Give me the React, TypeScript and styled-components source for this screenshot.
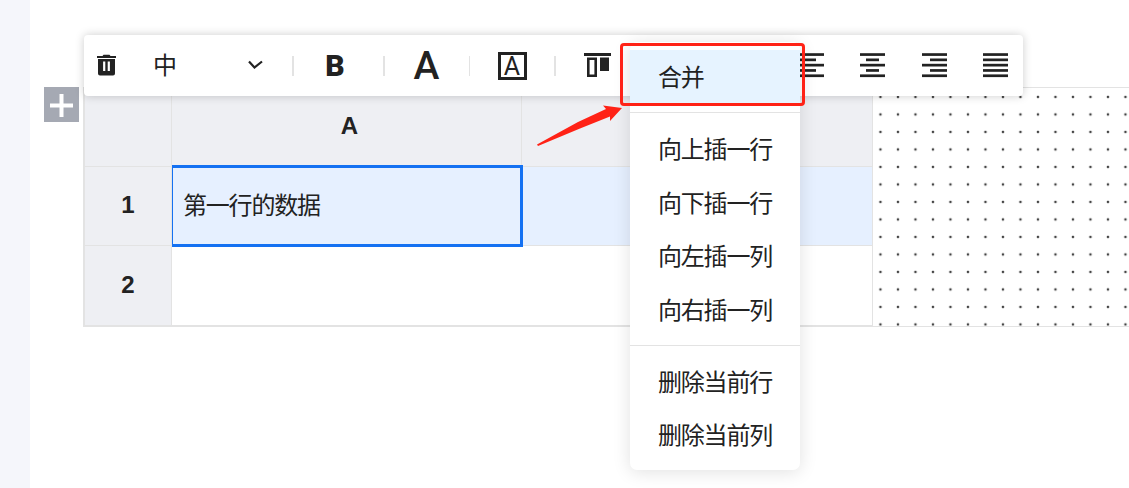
import React from 'react';
import styled, { createGlobalStyle } from 'styled-components';

const GlobalStyle = createGlobalStyle`
  * { box-sizing: border-box; }
  body {
    margin: 0;
    overflow: hidden;
    background: #fff;
    color: #222;
    font-family: 'Liberation Sans', 'Noto Sans CJK SC', sans-serif;
  }
`;

const Page = styled.div`
  position: relative;
  display: flex;
  width: 1129px;
  height: 488px;
  overflow: hidden;
`;

const Sidebar = styled.aside`
  flex: 0 0 30px;
  background: #f5f6fb;
`;

const Editor = styled.main`
  flex: 1;
  display: flex;
  align-items: flex-start;
  padding: 87px 0 0 14px;
`;

const AddButton = styled.button`
  display: flex;
  align-items: center;
  justify-content: center;
  flex: 0 0 35px;
  height: 35px;
  margin-right: 4px;
  padding: 2px 0 0;
  border: 0;
  background: #a5a9b3;
`;

const Sheet = styled.div`
  display: grid;
  flex: 0 0 790px;
  grid-template-columns: 87px 350px 351px;
  grid-template-rows: 80px 79px 79px;
  height: 240px;
  border-left: 2px solid #e3e3e3;
  border-bottom: 2px solid #e3e3e3;
`;

const Cell = styled.div<{ $fill: string; $selected?: boolean; $open?: boolean }>`
  position: relative;
  z-index: ${(p) => (p.$selected ? 1 : 0)};
  display: flex;
  align-items: center;
  padding: 0 11px 5px;
  border-right: 1px solid ${(p) => (p.$open ? 'transparent' : '#e3e3e3')};
  border-bottom: 1px solid #e3e3e3;
  background: ${(p) => p.$fill};
  font-size: 24px;
  letter-spacing: -1.2px;
  white-space: nowrap;
  &:nth-child(n + 7) { border-bottom: 0; }
`;

const HeadCell = styled(Cell)<{ $shift?: number }>`
  justify-content: center;
  padding: 0 0 2px ${(p) => p.$shift ?? 0}px;
  font-weight: 700;
  letter-spacing: 0;
`;

const Selection = styled.span`
  position: absolute;
  inset: -2px -2px -2px 0;
  border: 3px solid #1471f2;
  border-left-width: 1px;
`;

const DotCanvas = styled.div`
  flex: 1;
  height: 240px;
  border-top: 1px solid #e3e3e3;
  border-bottom: 1px solid #e3e3e3;
  background-image: radial-gradient(circle at center, #444 0.75px, transparent 1.7px);
  background-size: 17.5px 17.5px;
  background-position: -1.3px 0.2px;
`;

const Toolbar = styled.div`
  position: absolute;
  z-index: 2;
  left: 84px;
  top: 35px;
  display: flex;
  align-items: center;
  width: 939px;
  height: 61px;
  border-radius: 4px;
  background: #fff;
  box-shadow: 0 0 10px rgba(0, 0, 0, 0.2);
`;

const Tool = styled.div<{ $w: number; $after?: number }>`
  display: flex;
  align-items: center;
  justify-content: center;
  flex: 0 0 ${(p) => p.$w}px;
  height: 100%;
  margin-right: ${(p) => p.$after ?? 0}px;
`;

const SizeSelect = styled.div`
  display: flex;
  align-items: center;
  justify-content: space-between;
  flex: 0 0 163px;
  padding: 0 29px 4px 24px;
  font-size: 24px;
`;

const Divider = styled.i<{ $w?: number }>`
  flex: 0 0 ${(p) => p.$w ?? 2}px;
  height: 20px;
  background: #e3e3e3;
`;

const Letter = styled.span<{ $size: number; $weight: number; $drop?: number }>`
  padding-top: ${(p) => p.$drop ?? 0}px;
  font: ${(p) => p.$weight} ${(p) => p.$size}px/1 Roboto, sans-serif;
`;

const BoxedLetter = styled.span`
  display: flex;
  align-items: center;
  justify-content: center;
  width: 29px;
  height: 28px;
  border: 3px solid #222;
`;

const Menu = styled.div`
  position: absolute;
  z-index: 3;
  left: 630px;
  top: 42px;
  width: 170px;
  height: 428px;
  padding: 8px 0;
  border-radius: 7px;
  background: #fff;
  box-shadow: 0 2px 18px rgba(0, 0, 0, 0.12);
`;

const MenuItem = styled.div<{ $active?: boolean }>`
  display: flex;
  align-items: center;
  height: 53.5px;
  padding: 0 0 2px 28px;
  background: ${(p) => (p.$active ? '#e6f3ff' : 'transparent')};
  font-size: 24px;
  letter-spacing: -1.2px;
  white-space: nowrap;
`;

const MenuRule = styled.div`
  height: 1px;
  margin: 8.7px 0;
  background: #e3e3e3;
`;

const Callout = styled.div`
  position: absolute;
  z-index: 4;
  left: 620px;
  top: 43px;
  width: 185px;
  height: 63px;
  border: 3px solid #ff2216;
  border-radius: 4px;
`;

const Arrow = styled.svg`
  position: absolute;
  z-index: 4;
  left: 530px;
  top: 100px;
`;

const alignments: [number, number][][] = [
  [[0, 25], [0, 17], [0, 25], [0, 17], [0, 25]],
  [[0, 25], [6, 19], [0, 25], [6, 19], [0, 25]],
  [[0, 25], [8, 25], [0, 25], [8, 25], [0, 25]],
  [[0, 25], [0, 25], [0, 25], [0, 25], [0, 25]],
];

const AlignIcon = ({ lines }: { lines: [number, number][] }) => (
  <svg width="25" height="25" fill="#222">
    {lines.map(([a, b], i) => (
      <rect key={i} x={a} y={i * 5.3 + 0.2} width={b - a} height="2.7" />
    ))}
  </svg>
);

export default function App() {
  return (
    <Page>
      <GlobalStyle />
      <Sidebar />
      <Editor>
        <AddButton aria-label="add">
          <svg width="25" height="25" stroke="#fff" strokeWidth="4">
            <path d="M12.5 1v23M1 12.5h23" />
          </svg>
        </AddButton>
        <Sheet>
          <HeadCell $fill="#eeeff3" />
          <HeadCell $fill="#eeeff3" $shift={6}>A</HeadCell>
          <HeadCell $fill="#eeeff3" $shift={6}>B</HeadCell>
          <HeadCell $fill="#eeeff3">1</HeadCell>
          <Cell $fill="#e6f0ff" $selected>第一行的数据<Selection /></Cell>
          <Cell $fill="#e6f0ff" />
          <HeadCell $fill="#eeeff3">2</HeadCell>
          <Cell $fill="#fff" $open />
          <Cell $fill="#fff" />
        </Sheet>
        <DotCanvas />
      </Editor>

      <Toolbar>
        <Tool $w={45}>
          <svg width="19" height="23" fill="#222">
            <path d="M0 2h5.500L6.500 0.800h6L13.500 2H19v2H0zM1 5h17v14.500a2 2 0 0 1-2 2H3a2 2 0 0 1-2-2z" />
            <path d="M7.2 7.500v9.500M11.8 7.500v9.500" stroke="#fff" strokeWidth="2.2" />
          </svg>
        </Tool>
        <SizeSelect>
          中
          <svg width="15" height="8" fill="none" stroke="#222" strokeWidth="2.2" overflow="visible">
            <path d="M1 1.500l5.500 6 7.500-6" />
          </svg>
        </SizeSelect>
        <Divider />
        <Tool $w={82} $after={7}><Letter $size={30} $weight={900}>B</Letter></Tool>
        <Divider />
        <Tool $w={83} $after={1}><Letter $size={39} $weight={500} $drop={2}>A</Letter></Tool>
        <Divider $w={1} />
        <Tool $w={84}><BoxedLetter><Letter $size={25} $weight={400} $drop={2}>A</Letter></BoxedLetter></Tool>
        <Divider />
        <Tool $w={82} $after={143}>
          <svg width="27" height="25" fill="#222">
            <path d="M0 0h27v3H0zM16 4.500h9V18h-9z" />
            <path d="M4.300 5.800h7.400v17H4.300z" fill="none" stroke="#222" strokeWidth="2.6" />
          </svg>
        </Tool>
        {alignments.map((lines, i) => (
          <Tool key={i} $w={61.3}><AlignIcon lines={lines} /></Tool>
        ))}
      </Toolbar>

      <Menu>
        <MenuItem $active>合并</MenuItem>
        <MenuRule />
        <MenuItem>向上插一行</MenuItem>
        <MenuItem>向下插一行</MenuItem>
        <MenuItem>向左插一列</MenuItem>
        <MenuItem>向右插一列</MenuItem>
        <MenuRule />
        <MenuItem>删除当前行</MenuItem>
        <MenuItem>删除当前列</MenuItem>
      </Menu>

      <Callout />
      <Arrow width="95" height="50" fill="#ff2216">
        <path d="M7 44.500L48 22L76 9L73 5.500L92 8L80 21L80 16.500L50 28.500L8 46z" />
      </Arrow>
    </Page>
  );
}
